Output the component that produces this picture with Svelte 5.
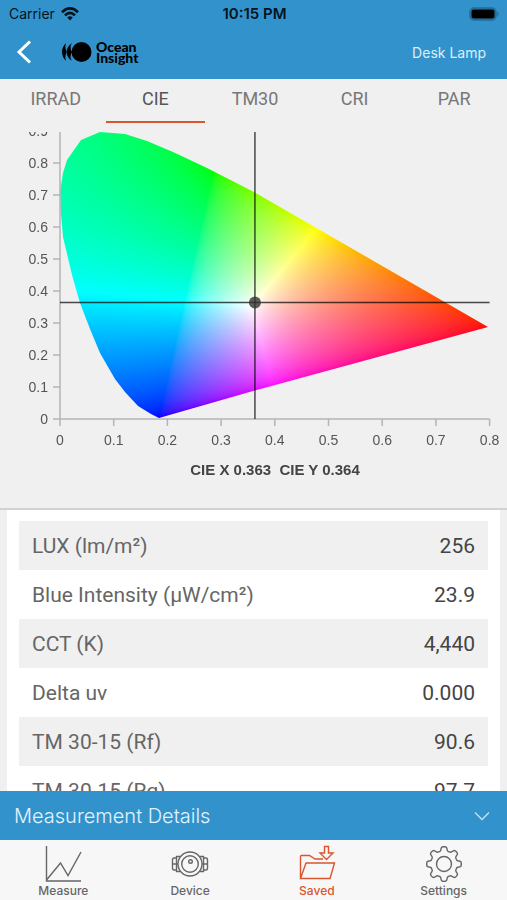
<script>
  import { onMount } from 'svelte';

  const chartTabs = ['IRRAD', 'CIE', 'TM30', 'CRI', 'PAR'];
  let activeTab = 'CIE';

  const readings = [
    { label: 'LUX (lm/m²)', value: '256' },
    { label: 'Blue Intensity (µW/cm²)', value: '23.9' },
    { label: 'CCT (K)', value: '4,440' },
    { label: 'Delta uv', value: '0.000' },
    { label: 'TM 30-15 (Rf)', value: '90.6' },
    { label: 'TM 30-15 (Rg)', value: '97.7' }
  ];

  const cie = { x: 0.363, y: 0.364 };

  // chart geometry, in viewBox units
  const chartWidth = 507;
  const chartHeight = 350;
  const originX = 60;
  const originY = 287;
  const unitX = 537;
  const unitY = 320;

  const xTicks = [0, 0.1, 0.2, 0.3, 0.4, 0.5, 0.6, 0.7, 0.8];
  const yTicks = [0, 0.1, 0.2, 0.3, 0.4, 0.5, 0.6, 0.7, 0.8, 0.9];

  const toX = (value) => originX + value * unitX;
  const toY = (value) => originY - value * unitY;

  // spectral locus, clockwise from the left edge
  const locus = [
    [60, 60], [63, 41], [67, 28], [81, 8], [100, 0], [125, 2], [147, 9],
    [173, 20], [207, 36], [254, 60], [488, 195], [253, 259], [159, 286],
    [151, 282], [138, 274], [125, 260], [115, 247], [100, 221], [90, 197],
    [80, 171], [72, 143], [63, 105], [61, 82]
  ];

  const red = [488, 195];
  const green = [213, 40];
  const blue = [159, 284];
  const white = [251, 174];

  /** @type {HTMLCanvasElement} */
  let canvas;

  // barycentric weights of a point in the red, green, blue triangle
  function weights(x, y) {
    const d = (green[1] - blue[1]) * (red[0] - blue[0]) + (blue[0] - green[0]) * (red[1] - blue[1]);
    const r = ((green[1] - blue[1]) * (x - blue[0]) + (blue[0] - green[0]) * (y - blue[1])) / d;
    const g = ((blue[1] - red[1]) * (x - blue[0]) + (red[0] - blue[0]) * (y - blue[1])) / d;
    return [r, g, 1 - r - g];
  }

  const base = weights(white[0], white[1]);

  function colorAt(x, y) {
    let [r, g, b] = weights(x, y).map((w, i) => w / base[i]);
    // left of the green-blue line the greens lean towards cyan
    if (r < 0) b += 0.12 * -r * Math.max(0, g - b);
    const rgb = [r, g, b].map((value) => Math.max(0, value));
    const peak = Math.max(...rgb);
    return rgb.map((value) => 255 * Math.pow(value / peak, 1 / 1.8));
  }

  function drawGamut() {
    const ctx = canvas.getContext('2d');
    const image = ctx.createImageData(chartWidth, chartHeight);

    for (let y = 0; y < chartHeight; y++) {
      for (let x = 0; x < chartWidth; x++) {
        image.data.set([...colorAt(x, y), 255], (y * chartWidth + x) * 4);
      }
    }
    ctx.putImageData(image, 0, 0);

    // keep only what lies inside the locus
    ctx.globalCompositeOperation = 'destination-in';
    ctx.beginPath();
    locus.forEach(([x, y]) => ctx.lineTo(x, y));
    ctx.closePath();
    ctx.fill();
  }

  onMount(drawGamut);

  // outline of the settings gear
  function gearPath(cx, cy, teeth) {
    const points = [];
    for (let i = 0; i <= 160; i++) {
      const angle = (i / 160) * Math.PI * 2;
      const wave = Math.tanh(2.2 * Math.cos(teeth * angle));
      const radius = 15.3 + 2.1 * wave;
      points.push(`${(cx + radius * Math.sin(angle)).toFixed(2)} ${(cy - radius * Math.cos(angle)).toFixed(2)}`);
    }
    return `M${points.join('L')}Z`;
  }
</script>

<div class="app">
  <header class="top">
    <div class="status">
      <span class="carrier">
        Carrier
        <svg width="18" height="14" viewBox="0 0 18 14" aria-hidden="true">
          <g fill="none" stroke="#06141e" stroke-width="2.7">
            <path d="M1 5.2Q9-2.6 17 5.2" />
            <path d="M4 8.4Q9 3.4 14 8.4" />
          </g>
          <path d="M6.2 10.4Q9 8 11.8 10.4L9 13.4Z" fill="#06141e" />
        </svg>
      </span>
      <span class="time">10:15 PM</span>
      <svg class="battery" width="31" height="14" viewBox="0 0 31 14" aria-hidden="true">
        <rect x="1" y="1" width="26" height="12" rx="4" fill="#2a7eaf" stroke="#226b96" stroke-width="1.5" />
        <rect x="2.5" y="2.5" width="23" height="9" rx="2" fill="#000" />
        <path d="M28.5 4.5Q31 7 28.5 9.5Z" fill="#1f6a94" />
      </svg>
    </div>

    <div class="bar">
      <button type="button" class="back" aria-label="Back">
        <svg width="16" height="26" viewBox="0 0 16 26">
          <path d="M14 2.5L3 13L14 23.5" fill="none" stroke="#fff" stroke-width="3" />
        </svg>
      </button>
      <div class="logo">
        <svg width="31" height="22" viewBox="0 0 31 22" aria-hidden="true">
          <path d="M5 2Q1 6 1 11T5 20Q3.500 16 5.500 11Q3.500 6 5 2Z" />
          <path d="M11 2Q5.500 6 5.500 11T11 20Q8 16 11 11Q8 6 11 2Z" />
          <circle cx="20.5" cy="11" r="10" />
        </svg>
        <span class="wordmark"><span>Ocean</span><span>Insight</span></span>
      </div>
      <span class="sample">Desk Lamp</span>
    </div>
  </header>

  <div class="tabs" role="tablist">
    {#each chartTabs as tab}
      <button
        type="button"
        role="tab"
        class:active={activeTab === tab}
        aria-selected={activeTab === tab}
        on:click={() => (activeTab = tab)}
      >
        {tab}
      </button>
    {/each}
  </div>

  <section class="chart" aria-label="CIE chromaticity">
    <div class="plot">
      <canvas bind:this={canvas} width={chartWidth} height={chartHeight}></canvas>
      <svg viewBox="0 0 {chartWidth} {chartHeight}">
        <g class="axis">
          <path d="M{originX} 0V{originY}H{toX(0.8)}" />
          {#each yTicks.slice(0, 9) as tick}
            <path d="M{originX - 7} {toY(tick)}H{originX}" />
          {/each}
          {#each xTicks as tick}
            <path d="M{toX(tick)} {originY}V{originY + 7}" />
          {/each}
        </g>
        <g class="labels">
          {#each yTicks as tick}
            <text x={originX - 12} y={toY(tick) + 5} text-anchor="end">{tick}</text>
          {/each}
          {#each xTicks as tick}
            <text x={toX(tick)} y={originY + 26} text-anchor="middle">{tick}</text>
          {/each}
        </g>
        <g class="cross">
          <path d="M{toX(cie.x)} 0V{originY}" />
          <path d="M{originX} {toY(cie.y)}H{toX(0.8)}" />
          <circle cx={toX(cie.x)} cy={toY(cie.y)} r="6" />
        </g>
        <text class="caption" x="275" y="343" text-anchor="middle">
          CIE X {cie.x}&nbsp; CIE Y {cie.y}
        </text>
      </svg>
    </div>
  </section>

  <main class="readings">
    <div class="sheet">
      <table>
        <tbody>
          {#each readings as reading}
            <tr>
              <th scope="row">{reading.label}</th>
              <td>{reading.value}</td>
            </tr>
          {/each}
        </tbody>
      </table>
    </div>
  </main>

  <button type="button" class="details">
    Measurement Details
    <svg width="16" height="10" viewBox="0 0 16 10" aria-hidden="true">
      <path d="M1 1.5L8 8.5L15 1.5" fill="none" stroke="#c4e2f5" stroke-width="1.3" />
    </svg>
  </button>

  <nav class="tabbar">
    <a href="#measure">
      <svg width="38" height="38" viewBox="0 0 38 38" aria-hidden="true">
        <path d="M2.500 1V36H37M2.500 35L16.500 18L24 30.500L37 7" />
      </svg>
      Measure
    </a>
    <a href="#device">
      <svg width="38" height="38" viewBox="0 0 38 38" aria-hidden="true">
        <circle cx="19" cy="19" r="12" />
        <circle cx="19" cy="19" r="8.3" />
        <circle cx="19.5" cy="16.5" r="1.8" />
        <path d="M9.500 11.500H5.500V26.500H9.500M5.500 13H3Q1.500 13 1.500 15V23Q1.500 25 3 25H5.500M1.500 19H7M28.500 11.500H32.500V26.500H28.500M32.500 13H35Q36.500 13 36.500 15V23Q36.500 25 35 25H32.500M31 19H36.500" />
      </svg>
      Device
    </a>
    <a href="#saved" class="active" aria-current="page">
      <svg width="38" height="38" viewBox="0 0 38 38" aria-hidden="true">
        <path d="M2.500 33.500V11.500Q2.500 10.500 3.500 10.500H11.500L17 14H25M2.500 33.500L8 18H36.500L32 33.500ZM26.500 1.500H30.500V8H35L28.500 14.500L22 8H26.500Z" />
      </svg>
      Saved
    </a>
    <a href="#settings">
      <svg width="38" height="38" viewBox="0 0 38 38" aria-hidden="true">
        <path d={gearPath(19, 19, 8)} />
        <circle cx="19" cy="19" r="7.5" />
      </svg>
      Settings
    </a>
  </nav>
</div>

<style>
  :global(body) {
    margin: 0;
    background: #f0f0f0;
  }

  .app {
    --blue: #3293cc;
    --orange: #d9562f;
    display: flex;
    flex-direction: column;
    height: 100vh;
    overflow: hidden;
    background: #f0f0f0;
    font-family: Roboto, "Liberation Sans", sans-serif;
  }

  button {
    margin: 0;
    padding: 0;
    border: 0;
    background: none;
    font: inherit;
    cursor: pointer;
  }

  .top {
    flex: none;
    background: var(--blue);
    font-family: Inter, "Liberation Sans", sans-serif;
  }

  .status {
    display: grid;
    grid-template-columns: 1fr auto 1fr;
    align-items: center;
    height: 27px;
    padding: 0 7px 0 9px;
    color: #06141e;
    font-size: 14px;
  }

  .carrier {
    display: flex;
    align-items: center;
    gap: 6px;
  }

  .time {
    font-size: 15px;
    font-weight: 600;
  }

  .battery {
    justify-self: end;
  }

  .bar {
    display: flex;
    align-items: center;
    height: 50px;
    padding: 0 21px 2px 16px;
  }

  .back,
  .back svg {
    display: block;
  }

  .logo {
    display: flex;
    align-items: center;
    gap: 4px;
    margin-left: 29px;
  }

  .wordmark {
    display: grid;
    color: #000;
    font-family: Lato, "Liberation Sans", sans-serif;
    font-size: 14px;
    font-weight: 900;
    line-height: 11px;
  }

  .sample {
    margin-left: auto;
    color: #dceefa;
    font-size: 14px;
  }

  .tabs {
    display: flex;
    flex: none;
    padding: 0 3px 0 6px;
  }

  .tabs button {
    flex: 1;
    height: 44px;
    padding-bottom: 3px;
    border-bottom: 2px solid transparent;
    color: #777;
    font-size: 18px;
  }

  .tabs button.active {
    border-bottom-color: var(--orange);
    color: #555;
  }

  .chart {
    flex: none;
    padding: 9px 0 26px;
    border-bottom: 2px solid #d2d2d2;
  }

  .plot {
    display: grid;
  }

  .plot canvas,
  .plot svg {
    display: block;
    grid-area: 1 / 1;
    width: 100%;
    height: auto;
    overflow: hidden;
  }

  .plot text {
    font-family: "Liberation Sans", Arial, sans-serif;
    font-size: 14px;
  }

  .axis path {
    fill: none;
    stroke: #b4b4b4;
    stroke-width: 1.5;
  }

  .labels text {
    fill: #555;
  }

  .cross path {
    stroke: #000;
    stroke-opacity: 0.7;
    stroke-width: 1.5;
  }

  .cross circle {
    fill: #333;
    fill-opacity: 0.8;
  }

  .plot .caption {
    fill: #444;
    font-size: 15px;
    font-weight: 700;
  }

  .readings {
    flex: 1;
    min-height: 0;
    overflow: hidden;
    padding: 0 7px;
  }

  .sheet {
    padding: 11px 12px;
    background: #fff;
  }

  table {
    width: 100%;
    border-collapse: collapse;
    font-size: 21px;
  }

  tr {
    height: 49px;
  }

  tr:nth-child(odd) {
    background: #f0f0f0;
  }

  th,
  td {
    padding: 0 13px;
    font-weight: 400;
  }

  th {
    color: #666;
    text-align: left;
  }

  td {
    color: #444;
    text-align: right;
  }

  .details {
    display: flex;
    flex: none;
    align-items: center;
    justify-content: space-between;
    height: 49px;
    padding: 0 17px 0 14px;
    background: var(--blue);
    color: #e3f2fc;
    font-family: Inter, "Liberation Sans", sans-serif;
    font-size: 20px;
    font-weight: 300;
  }

  .tabbar {
    display: grid;
    flex: none;
    grid-template-columns: repeat(4, 1fr);
    height: 60px;
    background: #f7f7f7;
    font-family: Inter, "Liberation Sans", sans-serif;
  }

  .tabbar a {
    display: flex;
    flex-direction: column;
    align-items: center;
    padding-top: 5px;
    color: #666;
    font-size: 12px;
    font-weight: 500;
    line-height: 16px;
    text-decoration: none;
  }

  .tabbar svg {
    fill: none;
    stroke: currentColor;
    stroke-width: 1.4;
  }

  .tabbar a.active {
    color: var(--orange);
  }
</style>
